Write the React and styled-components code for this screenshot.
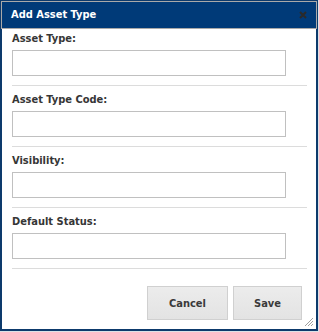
import React from "react";
import styled, { createGlobalStyle } from "styled-components";

const Global = createGlobalStyle`
  html, body { margin: 0; padding: 0; background: #dde1e6; }
  body { width: 319px; height: 332px; overflow: hidden; }
`;

const Dialog = styled.div`
  position: relative;
  box-sizing: border-box;
  width: 318px;
  height: 331px;
  background: #ffffff;
  border: 2px solid #0d3a6c;
  font-family: "DejaVu Sans Condensed", "DejaVu Sans", sans-serif;
  display: flex;
  flex-direction: column;
`;

const TitleBar = styled.div`
  box-sizing: border-box;
  height: 28px;
  margin: -1px -1px 0 -1px;
  background: #003a78;
  border: 1px solid #a9a9a9;
  display: flex;
  align-items: center;
  justify-content: space-between;
  padding: 0 8px 0 9px;
`;

const Title = styled.span`
  color: #ffffff;
  font-weight: bold;
  font-size: 11px;
  line-height: 14px;
`;

const CloseButton = styled.button`
  border: 0;
  background: none;
  padding: 0;
  width: 10px;
  height: 10px;
  display: flex;
  align-items: center;
  justify-content: center;
  cursor: pointer;
`;

const Body = styled.div`
  padding: 3px 9px 0 10px;
`;

const Field = styled.div`
  display: flex;
  flex-direction: column;
`;

const Label = styled.label`
  font-size: 11px;
  line-height: 14px;
  font-weight: bold;
  color: #363636;
  margin-bottom: 4px;
`;

const Input = styled.input`
  box-sizing: border-box;
  width: 274px;
  height: 26px;
  border: 1px solid #c0c0c0;
  background: #fff;
  margin: 0;
  padding: 2px 4px;
  outline: none;
`;

const Separator = styled.hr`
  border: 0;
  border-top: 1px solid #dcdcdc;
  margin: 9px 0 ${(p) => (p.$last ? "17px" : "7px")} 0;
  height: 0;
`;

const ButtonSet = styled.div`
  display: flex;
  justify-content: flex-end;
  gap: 5px;
  padding-right: 5px;
`;

const Button = styled.button`
  box-sizing: border-box;
  width: ${(p) => p.$w}px;
  height: 34px;
  padding: 0;
  border: 1px solid #d0d0d0;
  background: linear-gradient(#ececec, #e3e3e3);
  color: #3a3a3a;
  font-family: "DejaVu Sans Condensed", "DejaVu Sans", sans-serif;
  font-weight: bold;
  font-size: 11px;
  cursor: pointer;
`;

const Grip = styled.svg`
  position: absolute;
  right: 2px;
  bottom: 2px;
`;

const fields = ["Asset Type:", "Asset Type Code:", "Visibility:", "Default Status:"];

export default function App() {
  return (
    <>
      <Global />
      <Dialog>
        <TitleBar>
          <Title>Add Asset Type</Title>
          <CloseButton aria-label="close">
            <svg width="8" height="8" viewBox="0 0 8 8">
              <path d="M1 1 L7 7 M7 1 L1 7" stroke="#2a2a2a" strokeWidth="2" />
            </svg>
          </CloseButton>
        </TitleBar>
        <Body>
          {fields.map((f, i) => (
            <Field key={f}>
              <Label>{f}</Label>
              <Input type="text" />
              <Separator $last={i === fields.length - 1} />
            </Field>
          ))}
          <ButtonSet>
            <Button $w={81}>Cancel</Button>
            <Button $w={69}>Save</Button>
          </ButtonSet>
        </Body>
        <Grip width="10" height="10" viewBox="0 0 10 10">
          <path d="M9 1 L1 9 M9 4 L4 9 M9 7 L7 9" stroke="#a0a0a0" strokeWidth="1" />
        </Grip>
      </Dialog>
    </>
  );
}
